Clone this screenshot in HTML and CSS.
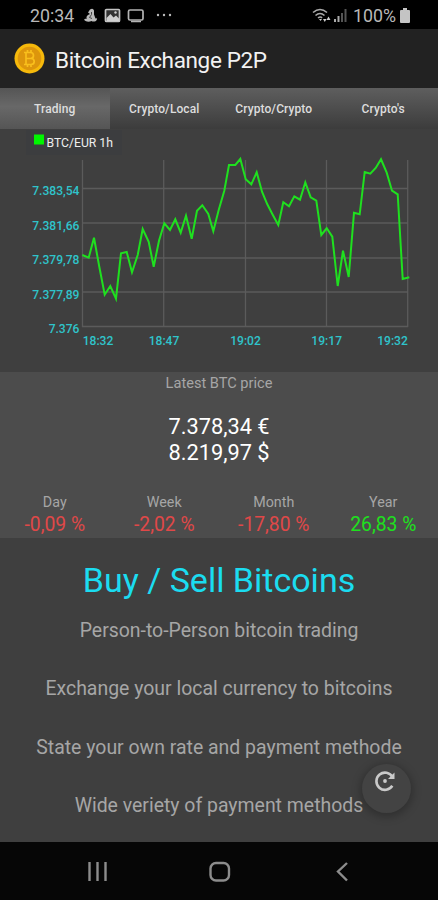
FILE: index.html
```
<!DOCTYPE html>
<html lang="en">
<head>
    <meta charset="UTF-8">
    <meta name="viewport" content="width=device-width, initial-scale=1.0">
    <title>Bitcoin Exchange P2P</title>
    <link rel="stylesheet" href="styles.css">
</head>
<body>
    <div class="statusbar">
        <span class="clock">20:34</span>
        <svg class="status-left" width="92" height="18" viewBox="0 0 92 18">
            <path d="M7 2.500q3-2 4 1v4l1.500 4q2 .5 1-1.500 1.500 2-.5 4-3 1-4.500 0-3 1.500-6 0 -2-1-1-2l2.500-.5q-1.500-1.500 1-3.500l2-1-2-1.500z" fill="#b9b9b9"/>
            <path d="M8.500 5v2.500l-2 3 2.500 1" stroke="#444" fill="none"/>
            <rect x="22.500" y="2.500" width="14" height="12" rx="1" fill="#333" stroke="#c4c4c4" stroke-width="1.700"/>
            <path d="M23.500 14v-3l4-4 3 3.500 2.500-2 3 3V14z" fill="#d0d0d0"/>
            <circle cx="32.500" cy="5.500" r="1.200" fill="#d0d0d0"/>
            <rect x="45.500" y="3" width="14.500" height="10" rx="1.500" fill="none" stroke="#b4b4b4" stroke-width="1.700"/>
            <path d="M48 14.500h10" stroke="#b4b4b4" stroke-width="1.500"/>
            <g fill="#bbb"><circle cx="75" cy="8" r="1.200"/><circle cx="81" cy="8" r="1.200"/><circle cx="87" cy="8" r="1.200"/></g>
        </svg>
        <svg class="status-right" width="38" height="18" viewBox="0 0 38 18">
            <g fill="none" stroke="#aaa" stroke-width="1.600">
                <path d="M1 5.500q7-6 14 0M3.500 8.500q4.500-4 9 0M6 11q2.500-2 4 0"/>
            </g>
            <path d="M7 12h3l-1.500 2zM11 12h3.500L12.800 15zM14.500 13l2-3.500 2 3.500z" fill="#ccc"/>
            <g fill="#aaa">
                <rect x="22" y="12" width="2" height="3"/>
                <rect x="25.500" y="9" width="2" height="6"/>
            </g>
            <g fill="#555">
                <rect x="29" y="6" width="2" height="9"/>
                <rect x="32.500" y="2" width="2" height="13"/>
            </g>
        </svg>
        <span class="percent">100%</span>
        <svg width="12" height="16" viewBox="0 0 12 16"><path d="M4 0h4v2h2q1 0 1 1v11q0 1-1 1H2q-1 0-1-1V3q0-1 1-1h2z" fill="#c4c4c4"/></svg>
    </div>

    <div class="appbar">
        <svg width="31" height="31" viewBox="0 0 31 31">
            <circle cx="15.500" cy="15.500" r="15" fill="#f6b90b"/>
            <circle cx="15.500" cy="15.500" r="11.800" fill="#dd960c"/>
            <path d="M12 9.500v12M10 9.500h6.500q3 0 3 3t-3 3H12h5q3.200 0 3.200 3t-3.200 3h-7M13.500 7v2.500M17 7v2.500M13.500 21.500V24M17 21.500V24" fill="none" stroke="#f9bf1c" stroke-width="1.700"/>
        </svg>
        <h1>Bitcoin Exchange P2P</h1>
    </div>

    <div class="tabs">
        <div class="tab active">Trading</div>
        <div class="tab">Crypto/Local</div>
        <div class="tab">Crypto/Crypto</div>
        <div class="tab">Crypto's</div>
    </div>

    <div class="chart">
        <svg width="438" height="243" viewBox="0 129 438 243">
            <rect x="26" y="130" width="96" height="25" fill="#3c3d3f"/>
            <rect x="34" y="134.500" width="10" height="10" fill="#00f500"/>
            <text class="legend" x="46.500" y="146.500">BTC/EUR 1h</text>
            <path class="grid" d="M82 188.500H408M82 223H408M82 258H408M82 292H408M82 326.500H408M82.500 160V327M163.700 160V327M245.500 160V327M326.500 160V327M407.700 160V327"/>
            <g class="label" text-anchor="end">
                <text x="79.500" y="195.200">7.383,54</text>
                <text x="79.500" y="229.600">7.381,66</text>
                <text x="79.500" y="264.300">7.379,78</text>
                <text x="79.500" y="298.800">7.377,89</text>
                <text x="79.500" y="333.100">7.376</text>
            </g>
            <g class="label" text-anchor="middle">
                <text x="98" y="345.300">18:32</text>
                <text x="164" y="345.300">18:47</text>
                <text x="245.500" y="345.300">19:02</text>
                <text x="326.700" y="345.300">19:17</text>
                <text x="392.500" y="345.300">19:32</text>
            </g>
            <polyline class="line" points="82.3,255 88.7,257.7 94,237.7 99.3,266.7 104.7,294.7 110.3,286 116,298.7 121,253.3 126.7,252 132,272.3 137.7,255 142.7,229 148.7,241.7 153.7,266.7 159,240.7 164.3,223.3 170,230 175.3,219.3 180.7,232.7 186,215.7 191.7,238.7 197,210.7 202.3,205.3 208.3,214 213.3,231.3 218.7,210 224.3,190.7 229,165 235.3,165 240.3,159 245.7,179.3 251.3,184.3 256.7,172.3 262,191.7 267.3,204.3 272.7,214.7 278.3,225 283.3,202.3 289,206.3 294.3,196.3 300,199.7 305.3,182.3 310.7,197.3 316.3,200.7 321.3,235 326.7,228.3 332.3,236.7 337.7,286 343,250.7 348.7,277 354,212.7 359.7,214.3 364.7,172 370.3,173.7 375.7,168 381,159.3 386.7,172.7 392,190.7 397.7,194.3 402.7,279 409.3,277.3"/>
        </svg>
    </div>

    <div class="price">
        <div class="caption">Latest BTC price</div>
        <div class="value">7.378,34 €<br>8.219,97 $</div>
        <div class="changes">
            <div class="change">Day<span class="down">-0,09 %</span></div>
            <div class="change">Week<span class="down">-2,02 %</span></div>
            <div class="change">Month<span class="down">-17,80 %</span></div>
            <div class="change">Year<span class="up">26,83 %</span></div>
        </div>
    </div>

    <div class="info">
        <h2>Buy / Sell Bitcoins</h2>
        <p>Person-to-Person bitcoin trading</p>
        <p>Exchange your local currency to bitcoins</p>
        <p>State your own rate and payment methode</p>
        <p>Wide veriety of payment methods</p>
        <button class="refresh">
            <svg width="24" height="24" viewBox="0 0 24 24">
                <path d="M19.500 8A8.600 8.600 0 1 0 19.300 16.800" fill="none" stroke="#c9c9c9" stroke-width="2.600"/>
                <path d="M21.500 3.500V10H15z" fill="#c9c9c9"/>
                <circle cx="12" cy="12" r="1.900" fill="#c9c9c9"/>
            </svg>
        </button>
    </div>

    <div class="navbar">
        <svg width="438" height="58" viewBox="0 0 438 58" fill="none" stroke="#8c8c8c">
            <path d="M89.500 20v19M97.500 20v19M105.500 20v19" stroke-width="2.400"/>
            <rect x="210.500" y="21" width="18.500" height="17.500" rx="5.500" stroke-width="2.400"/>
            <path d="M347 21l-9 8.500 9 9" stroke-width="2.400"/>
        </svg>
    </div>
</body>
</html>
```
FILE: styles.css
```
body {
    margin: 0;
    width: 438px;
    height: 900px;
    overflow: hidden;
    font-family: Roboto, sans-serif;
    background-color: #3f3f3f;
    color: #a6a6a6;
}
svg {
    display: block;
}
.statusbar {
    display: flex;
    align-items: center;
    box-sizing: border-box;
    height: 29px;
    padding: 2px 27px 0 30px;
    background: #000;
    color: #b9b9b9;
    font-size: 17.8px;
}
.status-left {
    margin-left: 9px;
}
.status-right {
    margin-left: auto;
    margin-right: 3px;
}
.percent {
    margin-right: 3px;
}
.appbar {
    display: flex;
    align-items: center;
    gap: 10px;
    height: 59px;
    padding-left: 14px;
    background: #222;
}
h1 {
    margin: 2px 0 0;
    font-size: 22.5px;
    font-weight: 400;
    letter-spacing: -0.35px;
    color: #f2f2f2;
}
.tabs {
    display: flex;
    height: 41px;
    background: linear-gradient(#5e5e5e, #3c3c3c);
}
.tab {
    flex: 1;
    line-height: 42px;
    text-align: center;
    font-size: 12px;
    font-weight: 500;
    letter-spacing: 0.1px;
    color: #ddd;
}
.tab.active {
    background: linear-gradient(#555, #686868 45%, #555);
}
.chart {
    height: 243px;
}
.legend {
    font-size: 12.2px;
    fill: #eee;
}
.label {
    font-size: 12.1px;
    font-weight: 500;
    fill: #2fc4cb;
}
.grid {
    stroke: #5b5b5b;
    stroke-width: 1.3;
}
.line {
    fill: none;
    stroke: #1fe01f;
    stroke-width: 2;
}
.price {
    box-sizing: border-box;
    height: 166px;
    background: #4c4c4c;
    text-align: center;
}
.caption {
    height: 42px;
    line-height: 23px;
    font-size: 14.6px;
}
.value {
    height: 79px;
    font-size: 21.8px;
    line-height: 26px;
    color: #fff;
}
.changes {
    display: flex;
}
.change {
    flex: 1;
    font-size: 14.3px;
    line-height: 19px;
}
.change span {
    display: block;
    font-size: 19.3px;
    line-height: 26px;
}
.down {
    color: #e04848;
}
.up {
    color: #1ee01e;
}
.info {
    position: relative;
    height: 304px;
    text-align: center;
}
h2 {
    margin: 0;
    height: 63px;
    line-height: 84px;
    font-size: 34px;
    font-weight: 400;
    color: #1bdcf0;
}
p {
    margin: 0;
    height: 58.3px;
    line-height: 60px;
    font-size: 19.45px;
}
.refresh {
    position: absolute;
    right: 27px;
    bottom: 29px;
    width: 49px;
    height: 49px;
    padding: 5px 0 0 11px;
    border: none;
    border-radius: 50%;
    background: #434343;
    box-shadow: 0 2px 9px 2px rgba(0, 0, 0, 0.25);
    display: flex;
    align-items: flex-start;
}
.navbar {
    height: 58px;
    background: #060606;
}
```
